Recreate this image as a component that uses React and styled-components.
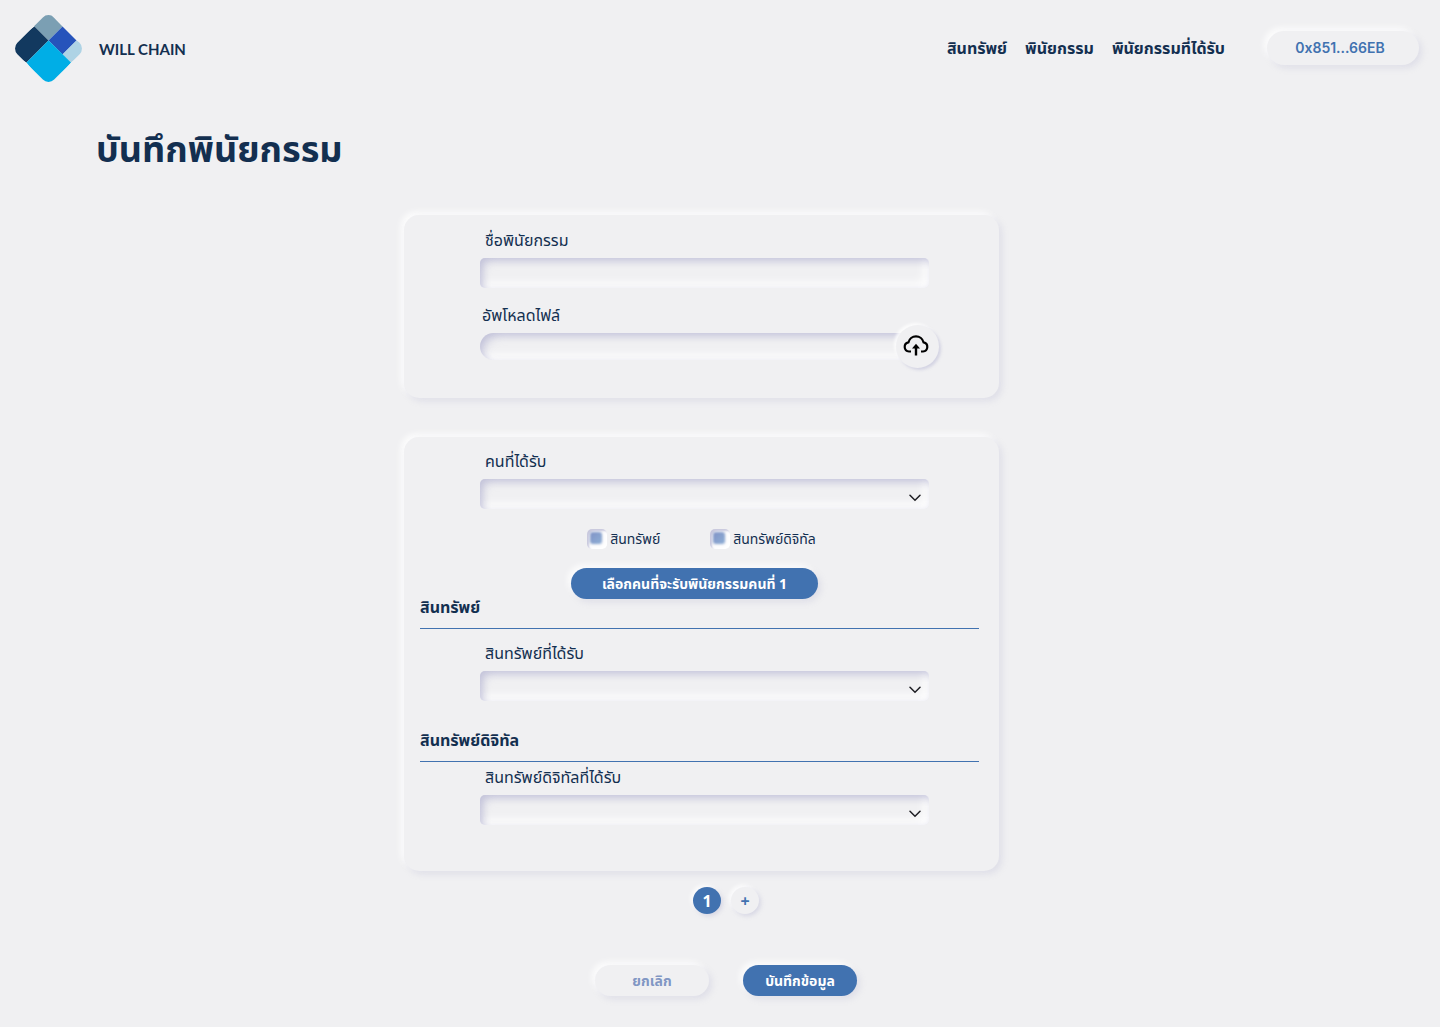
import React, { useState } from "react";
import styled, { createGlobalStyle } from "styled-components";

const ink = "#132f50";
const blue = "#4172b0";
const surface = "#f0f0f2";
const raised = "3px 3px 6px rgba(170, 170, 204, 0.25), -3px -3px 6px rgba(255, 255, 255, 0.9)";
const sunken =
  "inset 10px 10px 10px -8px rgba(170, 170, 204, 0.4), inset 2px 2px 7px rgba(170, 170, 204, 0.45), inset -5px -5px 10px #ffffff";

const GlobalStyle = createGlobalStyle`
  *, *::before, *::after { box-sizing: border-box; }
  body {
    margin: 0;
    background: ${surface};
    color: ${ink};
    font-family: Lato, "Noto Sans Thai", "Noto Sans", sans-serif;
    font-size: 16px;
  }
  button, input, select { font: inherit; }
`;

const Header = styled.header`
  display: flex;
  align-items: center;
  justify-content: space-between;
  padding: 15px 21px 15px 15px;
`;

const Brand = styled.a`
  display: flex;
  align-items: center;
  gap: 17px;
  color: ${ink};
  font-size: 15px;
  font-weight: 700;
  text-decoration: none;
`;

const HeaderRight = styled.div`
  display: flex;
  align-items: center;
  gap: 42px;
  padding-bottom: 2px;
`;

const Nav = styled.nav`
  display: flex;
  gap: 18px;
`;

const NavLink = styled.a`
  color: ${ink};
  font-size: 16px;
  font-weight: 700;
  line-height: 24px;
  text-decoration: none;
`;

const Button = styled.button`
  width: ${(p) => p.$width};
  height: 31px;
  padding: 0;
  border: 0;
  border-radius: 17px;
  background: ${(p) => (p.$primary ? blue : surface)};
  color: ${(p) => (p.$primary ? "#ffffff" : p.$muted ? "#8197c4" : blue)};
  box-shadow: ${raised};
  font-family: "Noto Sans", "Noto Sans Thai", sans-serif;
  font-size: 14px;
  font-weight: 700;
  line-height: 24px;
  white-space: nowrap;
  cursor: pointer;
`;

const WalletButton = styled(Button)`
  width: 152px;
  height: 34px;
  padding-right: 6px;
  font-family: Inter, sans-serif;
  font-weight: 600;
`;

const Title = styled.h1`
  margin: 0;
  padding: 23px 96px 0;
  font-size: 36px;
  font-weight: 700;
  line-height: 56px;
`;

const Form = styled.form`
  padding-bottom: 31px;
`;

const Cards = styled.div`
  display: flex;
  flex-direction: column;
  align-items: center;
  gap: 39px;
  padding: 39px 37px 0 0;
`;

const Card = styled.section`
  width: 100%;
  max-width: 595px;
  padding: ${(p) => p.$pad};
  border-radius: 15px;
  box-shadow: ${raised};
`;

const Field = styled.div`
  display: flex;
  flex-direction: column;
  gap: 6px;
  padding: ${(p) => p.$top || "0"} 50px 0 60px;
`;

const Label = styled.label`
  padding-left: ${(p) => p.$indent || "5px"};
  font-size: 16px;
  line-height: 24px;
`;

const TextInput = styled.input`
  width: 100%;
  height: 30px;
  padding: 0 12px;
  border: 0;
  border-radius: 5px;
  outline: 0;
  background: ${surface};
  color: ${ink};
  box-shadow: ${sunken};
`;

const FileInput = styled(TextInput)`
  height: 27px;
  border-radius: 14px;
`;

const UploadRow = styled.div`
  display: flex;
  align-items: center;
  height: 27px;
  margin-right: -10px;
`;

const UploadButton = styled.button`
  display: grid;
  place-items: center;
  flex: none;
  width: 43px;
  height: 43px;
  margin-left: -32px;
  padding: 0 3px 2px 0;
  border: 0;
  border-radius: 50%;
  background: ${surface};
  box-shadow: 2px 2px 3px rgba(170, 170, 204, 0.4), -2px -2px 3px rgba(255, 255, 255, 0.8);
  color: #000000;
  cursor: pointer;
`;

const SelectWrap = styled.div`
  position: relative;
  height: 30px;

  svg {
    position: absolute;
    right: 8px;
    bottom: 7px;
    pointer-events: none;
  }
`;

const Select = styled(TextInput).attrs({ as: "select" })`
  appearance: none;
`;

const CheckRow = styled.div`
  display: flex;
  justify-content: center;
  gap: 50px;
  padding: 20px 0 19px 4px;
`;

const CheckLabel = styled.label`
  display: flex;
  align-items: center;
  gap: 3px;
  height: 20px;
  font-size: 14px;
  line-height: 20px;
`;

const Checkbox = styled.input`
  appearance: none;
  display: grid;
  width: 20px;
  height: 20px;
  margin: 0;
  padding: 3px;
  border-radius: 5px;
  background: #f6f6f9;
  box-shadow: inset 2px 2px 2px rgba(170, 170, 204, 0.6), inset -3px -3px 4px #ffffff;

  &::before {
    content: "";
    width: 12px;
    height: 12px;
    border-radius: 3px;
    background: linear-gradient(135deg, #8093c6, #8fafd6);
    filter: blur(1px);
  }
`;

const Center = styled.div`
  display: flex;
  justify-content: center;
  padding-right: 10px;
`;

const SectionTitle = styled.h2`
  margin: ${(p) => p.$top || "0"} 0 0;
  padding-bottom: 13px;
  border-bottom: 1px solid ${blue};
  font-size: 16px;
  font-weight: 700;
  line-height: 16px;
`;

const Pager = styled.div`
  display: flex;
  justify-content: center;
  gap: 10px;
  padding: 16px 0 0 12px;
`;

const PageButton = styled(Button)`
  width: 28px;
  height: 27px;
  border-radius: 50%;
  box-shadow: 2px 2px 4px rgba(170, 170, 204, 0.35), -2px -2px 4px rgba(255, 255, 255, 0.9);
  font-size: 16px;
`;

const Actions = styled.div`
  display: flex;
  justify-content: center;
  gap: 34px;
  padding: 51px 0 0 12px;
`;

function Logo() {
  return (
    <svg width="67" height="67" viewBox="0 0 67 67" aria-hidden="true">
      <defs>
        <clipPath id="mark">
          <rect x="7.5" y="7.5" width="52" height="52" rx="8" transform="rotate(45 33.5 33.5)" />
        </clipPath>
      </defs>
      <g clipPath="url(#mark)">
        <path d="M33.5-3 L47.5 11.5 L33.5 25.5 L19.5 11.5 L10 2 Z" fill="#7b9fb3" />
        <path d="M19.5 11.5 L33.5 25.5 L11.5 47.5 L-12 33.5 Z" fill="#12395f" />
        <path d="M47.5 11.5 L61.5 25.5 L47.5 39.5 L33.5 25.5 Z" fill="#2653bb" />
        <path d="M61.5 25.5 L76 33.5 L56 47.5 L47.5 39.5 Z" fill="#aed3e5" />
        <path d="M33.5 25.5 L56 47.5 L33.5 76 L11.5 47.5 Z" fill="#00aee6" />
      </g>
    </svg>
  );
}

function CloudUpload() {
  return (
    <svg width="26" height="22" viewBox="0 0 26 22" fill="none" aria-hidden="true">
      <path d="M8 16.5 H6 A4.6 4.6 0 0 1 5.4 7.4 A7.8 7.8 0 0 1 20.6 7.4 A4.6 4.6 0 0 1 20 16.5 H18" stroke="currentColor" strokeWidth="2.2" />
      <path d="M13 20.5 V12" stroke="currentColor" strokeWidth="2.4" />
      <path d="M13 8.8 L17 13.4 H9 Z" fill="currentColor" />
    </svg>
  );
}

function SelectField({ id, label, top }) {
  return (
    <Field $top={top}>
      <Label htmlFor={id}>{label}</Label>
      <SelectWrap>
        <Select id={id} defaultValue="">
          <option value="" />
        </Select>
        <svg width="12" height="8" viewBox="0 0 12 8" fill="none" aria-hidden="true">
          <path d="M1 1.3 L6 6.3 L11 1.3" stroke="#1d1d22" strokeWidth="1.5" strokeLinecap="round" />
        </svg>
      </SelectWrap>
    </Field>
  );
}

export default function App() {
  const [name, setName] = useState("");
  return (
    <>
      <GlobalStyle />
      <Header>
        <Brand href="#">
          <Logo />
          WILL CHAIN
        </Brand>
        <HeaderRight>
          <Nav>
            <NavLink href="#assets">สินทรัพย์</NavLink>
            <NavLink href="#wills">พินัยกรรม</NavLink>
            <NavLink href="#received">พินัยกรรมที่ได้รับ</NavLink>
          </Nav>
          <WalletButton type="button">0x851...66EB</WalletButton>
        </HeaderRight>
      </Header>
      <main>
        <Title>บันทึกพินัยกรรม</Title>
        <Form onSubmit={(e) => e.preventDefault()}>
          <Cards>
            <Card $pad="13px 20px 38px 16px">
              <Field>
                <Label htmlFor="name">ชื่อพินัยกรรม</Label>
                <TextInput id="name" value={name} onChange={(e) => setName(e.target.value)} />
              </Field>
              <Field $top="15px">
                <Label htmlFor="file" $indent="2px">อัพโหลดไฟล์</Label>
                <UploadRow>
                  <FileInput id="file" readOnly />
                  <UploadButton type="button" aria-label="อัพโหลดไฟล์">
                    <CloudUpload />
                  </UploadButton>
                </UploadRow>
              </Field>
            </Card>
            <Card $pad="12px 20px 46px 16px">
              <SelectField id="heir" label="คนที่ได้รับ" />
              <CheckRow>
                <CheckLabel>
                  <Checkbox type="checkbox" />
                  สินทรัพย์
                </CheckLabel>
                <CheckLabel>
                  <Checkbox type="checkbox" />
                  สินทรัพย์ดิจิทัล
                </CheckLabel>
              </CheckRow>
              <Center>
                <Button type="button" $primary $width="247px">เลือกคนที่จะรับพินัยกรรมคนที่ 1</Button>
              </Center>
              <SectionTitle>สินทรัพย์</SectionTitle>
              <SelectField id="asset" label="สินทรัพย์ที่ได้รับ" top="12px" />
              <SectionTitle $top="31px">สินทรัพย์ดิจิทัล</SectionTitle>
              <SelectField id="digital" label="สินทรัพย์ดิจิทัลที่ได้รับ" top="3px" />
            </Card>
          </Cards>
          <Pager>
            <PageButton type="button" $primary>1</PageButton>
            <PageButton type="button">+</PageButton>
          </Pager>
          <Actions>
            <Button type="button" $muted $width="114px">ยกเลิก</Button>
            <Button type="submit" $primary $width="114px">บันทึกข้อมูล</Button>
          </Actions>
        </Form>
      </main>
    </>
  );
}
